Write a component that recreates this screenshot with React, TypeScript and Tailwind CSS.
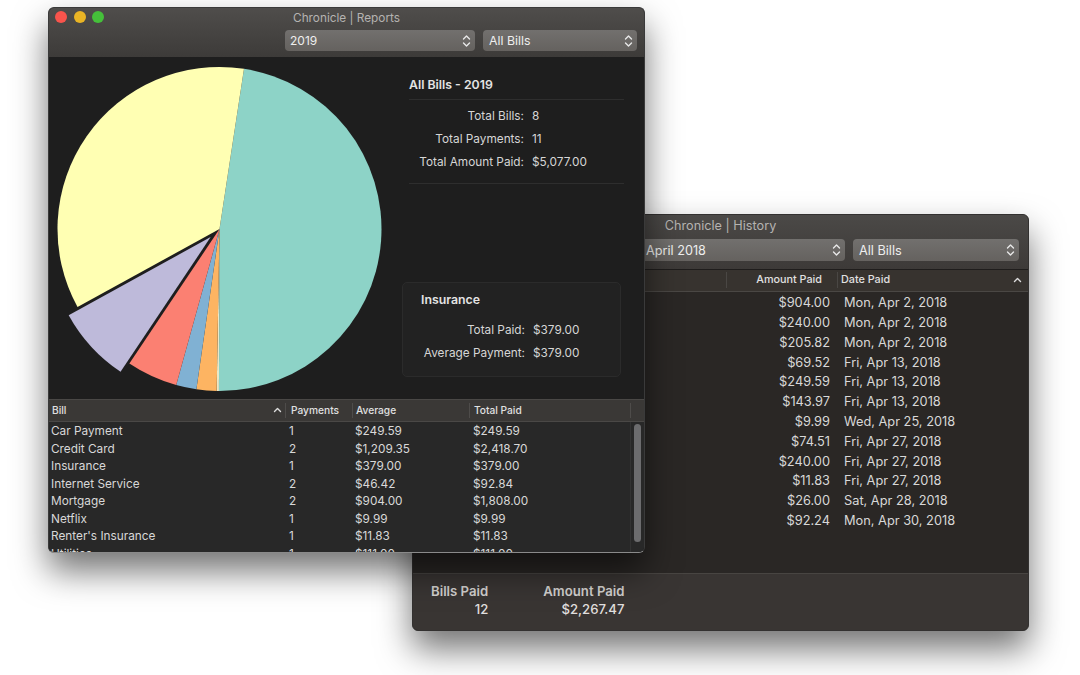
import React from "react";

const FONT = 'Inter, "Liberation Sans", sans-serif';

function pt(cx: number, cy: number, r: number, deg: number): [number, number] {
  const a = (deg * Math.PI) / 180;
  return [cx + r * Math.sin(a), cy - r * Math.cos(a)];
}

function slice(a0: number, a1: number, explode = 0) {
  const mid = (a0 + a1) / 2;
  const [cx, cy] = pt(219.5, 229, explode, mid);
  const [x0, y0] = pt(cx, cy, 162, a0);
  const [x1, y1] = pt(cx, cy, 162, a1);
  const large = a1 - a0 > 180 ? 1 : 0;
  return `M${cx} ${cy}L${x0} ${y0}A162 162 0 ${large} 1 ${x1} ${y1}Z`;
}

function Updown() {
  return (
    <svg width="9" height="14" viewBox="0 0 9 14" fill="none" stroke="#e8e8e8" strokeWidth="1.4" strokeLinecap="round" strokeLinejoin="round">
      <path d="M1.5 5 4.5 2 7.5 5" />
      <path d="M1.5 9 4.5 12 7.5 9" />
    </svg>
  );
}

function Select({ label, className }: { label: string; className: string }) {
  return (
    <div className={`flex items-center justify-between rounded-[4px] bg-gradient-to-b from-[#72706e] to-[#65625f] pr-[4px] text-[#eeeeee] ${className}`}>
      <span className="pt-[1px]">{label}</span>
      <Updown />
    </div>
  );
}

function Caret() {
  return (
    <svg width="9" height="6" viewBox="0 0 9 6" fill="none" stroke="#dddddd" strokeWidth="1.4" strokeLinecap="round" strokeLinejoin="round">
      <path d="M1.5 4.5 4.5 1.5 7.5 4.5" />
    </svg>
  );
}

const reportRows = [
  ["Car Payment", "1", "$249.59", "$249.59"],
  ["Credit Card", "2", "$1,209.35", "$2,418.70"],
  ["Insurance", "1", "$379.00", "$379.00"],
  ["Internet Service", "2", "$46.42", "$92.84"],
  ["Mortgage", "2", "$904.00", "$1,808.00"],
  ["Netflix", "1", "$9.99", "$9.99"],
  ["Renter's Insurance", "1", "$11.83", "$11.83"],
  ["Utilities", "1", "$111.00", "$111.00"],
];

const historyRows = [
  ["$904.00", "Mon, Apr 2, 2018"],
  ["$240.00", "Mon, Apr 2, 2018"],
  ["$205.82", "Mon, Apr 2, 2018"],
  ["$69.52", "Fri, Apr 13, 2018"],
  ["$249.59", "Fri, Apr 13, 2018"],
  ["$143.97", "Fri, Apr 13, 2018"],
  ["$9.99", "Wed, Apr 25, 2018"],
  ["$74.51", "Fri, Apr 27, 2018"],
  ["$240.00", "Fri, Apr 27, 2018"],
  ["$11.83", "Fri, Apr 27, 2018"],
  ["$26.00", "Sat, Apr 28, 2018"],
  ["$92.24", "Mon, Apr 30, 2018"],
];

function StatRow({ label, value, labelW }: { label: string; value: string; labelW: string }) {
  return (
    <div className="flex h-[23px] items-center text-[11.8px] text-[#d6d6d6]">
      <span className={`text-right ${labelW}`}>{label}</span>
      <span className="ml-[8px]">{value}</span>
    </div>
  );
}

function ReportsWindow() {
  return (
    <div className="absolute left-[48px] top-[7px] z-10 flex h-[546px] w-[597px] flex-col overflow-hidden rounded-[6px] border border-[#3a3a3a] border-b-[#8a8a8a] bg-[#1e1e1e] shadow-[0_18px_34px_rgba(0,0,0,0.55)]">
      <div className="relative h-[49px] shrink-0 bg-gradient-to-b from-[#4f4d4b] to-[#3d3b39]">
        <div className="absolute left-[6px] top-[3px] flex gap-[6.5px]">
          <span className="h-[12px] w-[12px] rounded-full bg-[#f9544c]" />
          <span className="h-[12px] w-[12px] rounded-full bg-[#e9b425]" />
          <span className="h-[12px] w-[12px] rounded-full bg-[#45c03a]" />
        </div>
        <div className="pt-[2px] text-center text-[11.8px] leading-[16px] text-[#b5b3b1]">Chronicle | Reports</div>
        <div className="mt-[4px] flex justify-end gap-[8px] pr-[7px]">
          <Select label="2019" className="h-[21px] w-[190px] pl-[5px] text-[12px]" />
          <Select label="All Bills" className="h-[21px] w-[154px] pl-[6px] text-[12.3px]" />
        </div>
      </div>
      <div className="flex h-[342px] shrink-0 bg-[#1e1e1e]">
        <svg width="353" height="342" viewBox="49 57 353 342" className="shrink-0">
          <path d={slice(8.7, 180.2)} fill="#8dd3c7" />
          <path d={slice(180.2, 181)} fill="#e8e8c8" />
          <path d={slice(181, 188.2)} fill="#fdb462" />
          <path d={slice(188.2, 195.5)} fill="#80b1d3" />
          <path d={slice(195.5, 213.8)} fill="#fb8072" />
          <path d={slice(213.8, 241.2, 12)} fill="#bebada" />
          <path d={slice(241.2, 368.7)} fill="#ffffb3" />
        </svg>
        <div className="flex w-[243px] flex-col">
          <div className="ml-[7px] mt-[20px] w-[215px]">
            <div className="h-[23px] border-b border-[#2e2e2e] text-[12.3px] font-semibold leading-[16px] text-[#e4e4e4]">All Bills - 2019</div>
            <div className="pt-[5px]">
              <StatRow label="Total Bills:" value="8" labelW="w-[115px]" />
              <StatRow label="Total Payments:" value="11" labelW="w-[115px]" />
              <StatRow label="Total Amount Paid:" value="$5,077.00" labelW="w-[115px]" />
            </div>
            <div className="mt-[9px] border-b border-[#2e2e2e]" />
          </div>
          <div className="mt-[98px] h-[95px] w-[219px] rounded-[5px] border border-[#2b2b2b] bg-[#222222]">
            <div className="pl-[18px] pt-[9px] text-[12.3px] font-semibold leading-[16px] text-[#e4e4e4]">Insurance</div>
            <div className="pt-[11px]">
              <StatRow label="Total Paid:" value="$379.00" labelW="w-[122px]" />
              <StatRow label="Average Payment:" value="$379.00" labelW="w-[122px]" />
            </div>
          </div>
        </div>
      </div>
      <div className="flex h-[23px] shrink-0 items-center border-y border-[#4a4846] bg-[#3a3836] text-[10.2px] font-medium text-[#e0e0e0]">
        <div className="flex w-[237px] items-center justify-between border-r border-[#4e4c4a] pl-[3px] pr-[3px]">
          <span>Bill</span>
          <Caret />
        </div>
        <div className="w-[67px] border-r border-[#4e4c4a] pl-[5px]">Payments</div>
        <div className="w-[117px] border-r border-[#4e4c4a] pl-[3px]">Average</div>
        <div className="w-[161px] border-r border-[#4e4c4a] pl-[4px]">Total Paid</div>
      </div>
      <div className="relative min-h-0 flex-1 overflow-hidden bg-[#282828] pt-[1.5px]">
        {reportRows.map((r) => (
          <div key={r[0]} className="flex h-[17.5px] items-center text-[11.8px] text-[#d8d8d8]">
            <div className="w-[237px] pl-[2px]">{r[0]}</div>
            <div className="w-[67px] pl-[3px]">{r[1]}</div>
            <div className="w-[118px] pl-[2px]">{r[2]}</div>
            <div className="pl-[2px]">{r[3]}</div>
          </div>
        ))}
        <div className="absolute bottom-0 right-0 top-0 w-[14px] border-l border-[#333333] bg-[#282828]">
          <div className="ml-[3px] mt-[2px] h-[118px] w-[7px] rounded-full bg-[#6c6c6e]" />
        </div>
      </div>
    </div>
  );
}

function HistoryWindow() {
  return (
    <div className="absolute left-[412px] top-[214px] flex h-[417px] w-[617px] flex-col overflow-hidden rounded-[6px] border border-[#333130] bg-[#2a2725] shadow-[0_18px_34px_rgba(0,0,0,0.55)]">
      <div className="h-[54px] shrink-0 bg-gradient-to-b from-[#4b4947] to-[#3d3a38]">
        <div className="pt-[3px] text-center text-[12.7px] leading-[16px] text-[#b5b3b1]">Chronicle | History</div>
        <div className="mt-[5px] flex justify-end gap-[8px] pr-[9px]">
          <Select label="April 2018" className="h-[22px] w-[205px] pl-[6px] text-[12.7px]" />
          <Select label="All Bills" className="h-[22px] w-[166px] pl-[6px] text-[12.7px]" />
        </div>
      </div>
      <div className="flex h-[23px] shrink-0 items-center border-y border-[#1f1d1c] border-b-[#4a4744] bg-[#37332f] pb-[1px] text-[10.8px] font-medium text-[#e0e0e0]">
        <div className="w-[313px]" />
        <div className="w-[112px] border-l border-r border-[#4a4744] pr-[15px] text-right">Amount Paid</div>
        <div className="flex w-[187px] items-center justify-between pl-[3px] pr-[3px]">
          <span>Date Paid</span>
          <Caret />
        </div>
      </div>
      <div className="min-h-0 flex-1 bg-[#2a2725] pt-[1px]">
        {historyRows.map((r, i) => (
          <div key={i} className="flex h-[19.8px] items-center text-[12.8px] text-[#d8d8d8]">
            <div className="w-[417px] text-right">{r[0]}</div>
            <div className="pl-[14px]">{r[1]}</div>
          </div>
        ))}
      </div>
      <div className="flex h-[57px] shrink-0 gap-[55px] border-t border-[#484542] bg-[#393533] pl-[18px] pt-[8px] text-[13.2px] font-semibold leading-[18px] text-[#d2d0ce]">
        <div className="text-right">
          <div>Bills Paid</div>
          <div className="font-medium text-[#e0dfde]">12</div>
        </div>
        <div className="text-right">
          <div>Amount Paid</div>
          <div className="font-medium text-[#e0dfde]">$2,267.47</div>
        </div>
      </div>
    </div>
  );
}

export default function App() {
  return (
    <div className="relative h-[675px] w-[1080px] overflow-hidden bg-white" style={{ fontFamily: FONT }}>
      <HistoryWindow />
      <ReportsWindow />
    </div>
  );
}
